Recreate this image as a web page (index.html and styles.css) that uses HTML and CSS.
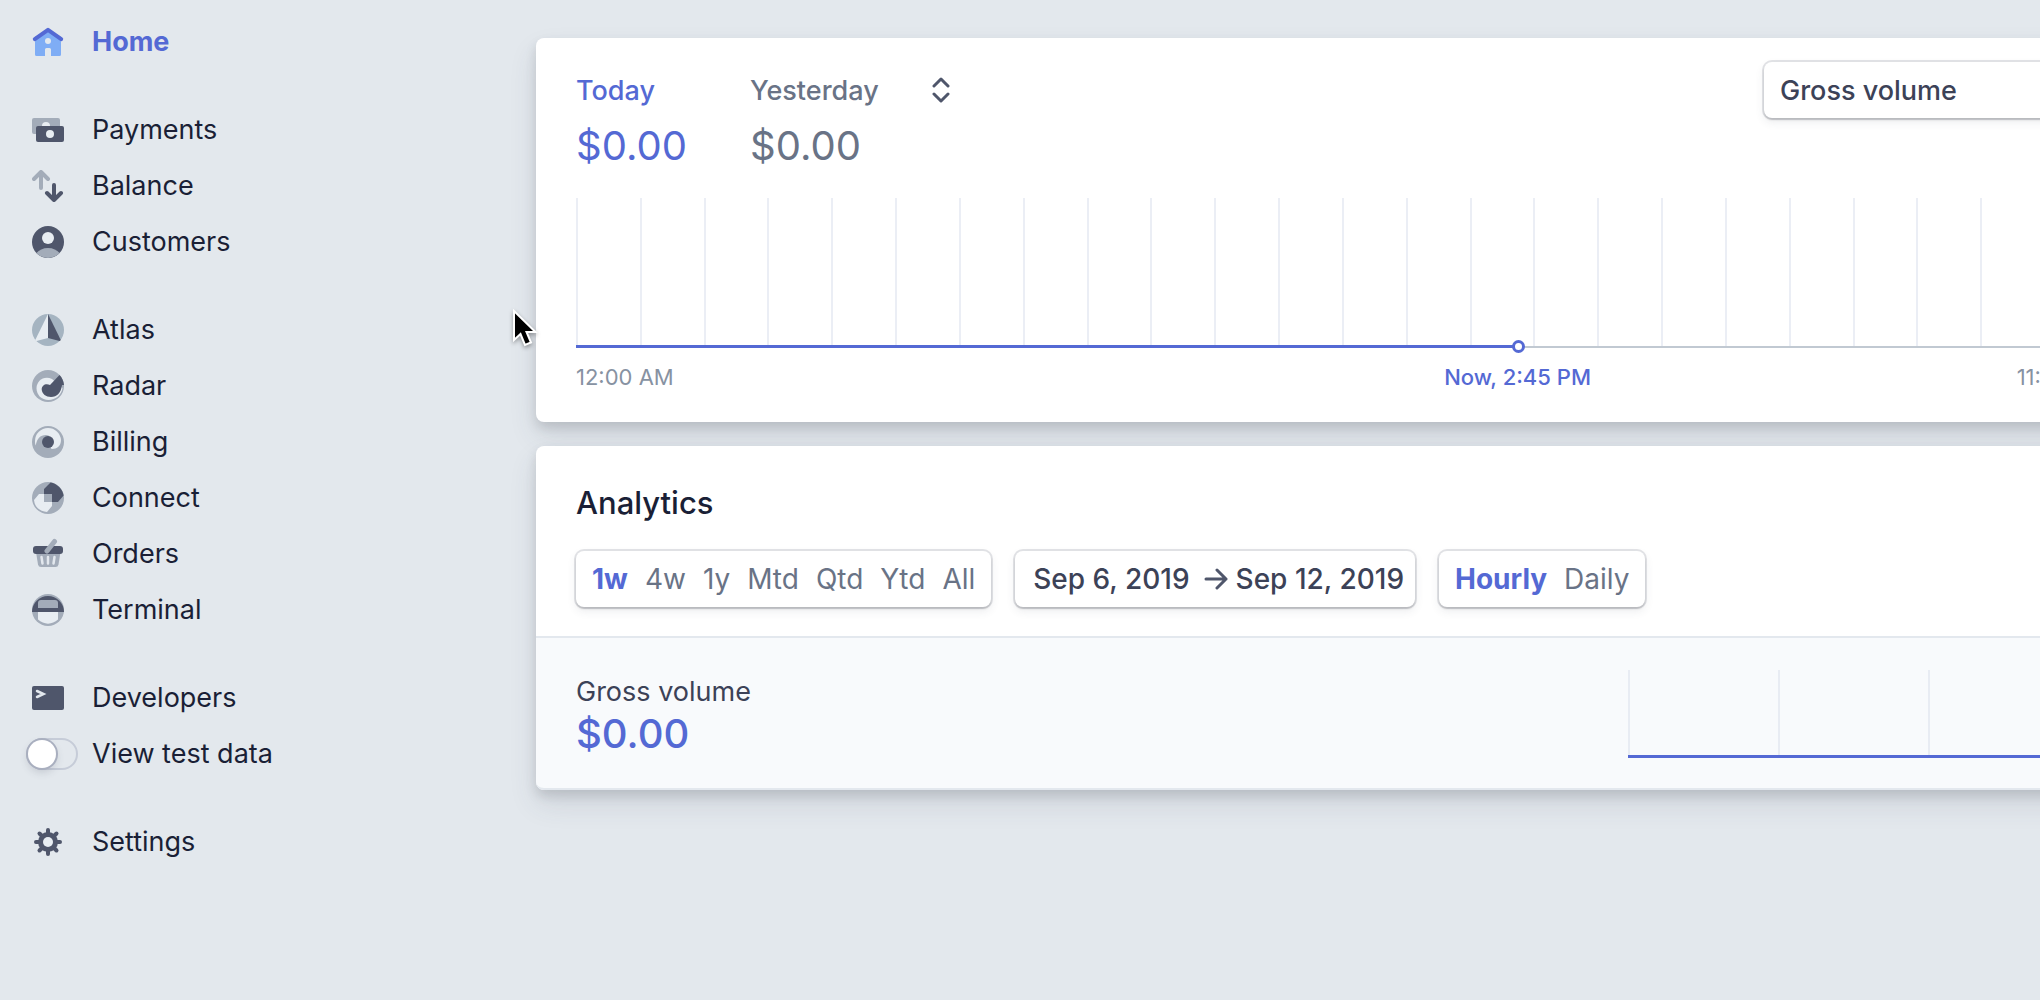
FILE: index.html
```html
<!DOCTYPE html>
<html lang="en">
<head>
<meta charset="utf-8">
<title>Home</title>
<link rel="stylesheet" href="styles.css">
</head>
<body>
<div class="app">
  <nav class="sidebar" aria-label="Main">
    <div class="nav-group">
      <a class="nav-item active" href="#"><svg class="icon" viewBox="0 0 32 32"><path d="M3 11 16 3 29 11V28.500a1.500 1.500 0 0 1-1.500 1.500H19V23.500a1.500 1.500 0 0 0-1.500-1.500h-3a1.500 1.500 0 0 0-1.500 1.500V30H4.500A1.500 1.500 0 0 1 3 28.500Z" fill="#7fadf5"/><path d="M2.800 13.200 16 3.800 29.200 13.200" fill="none" stroke="#5469d4" stroke-width="4" stroke-linecap="round" stroke-linejoin="round"/><circle cx="16" cy="15" r="3" fill="#e3e8ee"/></svg>Home</a>
    </div>
    <div class="nav-group">
      <a class="nav-item" href="#"><svg class="icon" viewBox="0 0 32 32"><rect y="4" width="28" height="16" rx="2" class="lt"/><circle cx="14" cy="12" r="4" class="bg"/><rect x="4" y="12" width="28" height="16" rx="2" class="dk"/><circle cx="18" cy="20" r="4" class="bg"/></svg>Payments</a>
      <a class="nav-item" href="#"><svg class="icon" viewBox="0 0 32 32"><g fill="none" stroke-width="4" stroke-linecap="round" stroke-linejoin="round"><path d="M2 9 9 2l7 7M9 3v15" stroke="#a3acb9"/><path d="m15 23 7 7 7-7M22 29V15" stroke="#4f566b"/></g></svg>Balance</a>
      <a class="nav-item" href="#"><svg class="icon" viewBox="0 0 32 32"><circle cx="16" cy="16" r="16" class="dk"/><circle cx="16" cy="12" r="6" class="bg"/><path d="M4.500 27C7 24 11 22 16 22s9 2 11.500 5A16 16 0 0 1 4.500 27Z" class="lt"/></svg>Customers</a>
    </div>
    <div class="nav-group">
      <a class="nav-item" href="#"><svg class="icon" viewBox="0 0 32 32"><circle cx="16" cy="16" r="16" fill="#a5b4c1"/><path d="M16 0 3.500 25.500Q3.500 27 4.500 27L16 24Z" class="bg"/><path d="M16 0 28.500 25.500Q28.800 27 27.500 27L16 24Z" class="dk"/></svg>Atlas</a>
      <a class="nav-item" href="#"><svg class="icon" viewBox="0 0 32 32"><circle cx="16" cy="16" r="16" class="lt"/><path d="M20 9C12 5 4.500 11 4.500 18c0 7 5 12 12 12 7 0 13-5 14-12Z" class="bg"/><path d="M27.500 5 18 15C14 13 9.700 15 9.700 19.500 10 24 14 27 19 27c6 0 10-4 11-12h2C31.500 11 30 7.500 27.500 5Z" class="dk"/></svg>Radar</a>
      <a class="nav-item" href="#"><svg class="icon" viewBox="0 0 32 32"><circle cx="16" cy="16" r="16" class="lt"/><path d="M16 2A13 13 0 0 1 29 14c0 6-4 9-9 9C17 23 22 9 14 9 8 9 5 13 3.700 19.500 3 18 3 16 3 15A13 13 0 0 1 16 2Z" class="bg"/><circle cx="16" cy="16" r="6" class="dk"/></svg>Billing</a>
      <a class="nav-item" href="#"><svg class="icon" viewBox="0 0 32 32"><circle cx="16" cy="16" r="16" class="lt"/><path d="M12 7 18.500.400C25 1.500 31 7 31.600 13.500L26 20H20V12H12Z" class="dk"/><path d="M2 18 7 12H12V20H20V24L15 30C8 29.500 2.500 25 2 18Z" class="bg"/></svg>Connect</a>
      <a class="nav-item" href="#"><svg class="icon" viewBox="0 0 32 32"><path d="M4 14H28.500L26.500 26.500Q26 29 23.500 29H9Q6.500 29 6 26.500Z" class="lt"/><path d="m9.500 19 1 6.500M16 19v6.500M22.500 19l-1 6.500" stroke="#e3e8ee" stroke-width="2.500" stroke-linecap="round"/><rect x="1" y="8" width="30" height="8" rx="3" class="dk"/><path d="M15 13 22.500 3.500" stroke="#a3acb9" stroke-width="5" stroke-linecap="round"/></svg>Orders</a>
      <a class="nav-item" href="#"><svg class="icon" viewBox="0 0 32 32"><circle cx="16" cy="16" r="16" class="lt"/><path d="M0 18a16 16 0 1 1 32 0Z" class="dk"/><path d="M6 14V9a3 3 0 0 1 3-3H23a3 3 0 0 1 3 3v5Z" class="lt"/><path d="M6 18H26v7.500C20 31 12 31 6 25.500Z" class="bg"/></svg>Terminal</a>
    </div>
    <div class="nav-group">
      <a class="nav-item" href="#"><svg class="icon" viewBox="0 0 32 32"><rect y="4" width="32" height="24" rx="2" class="dk"/><path d="m5 9 6.500 3L5 15" fill="none" stroke="#e3e8ee" stroke-width="2.500" stroke-linecap="round"/></svg>Developers</a>
      <label class="nav-item"><input class="toggle" type="checkbox">View test data</label>
    </div>
    <div class="nav-group">
      <a class="nav-item" href="#"><svg class="icon" viewBox="0 0 32 32"><g stroke="#4f566b" stroke-width="4" stroke-linecap="round"><path d="M16 4v24M4 16h24M7.500 7.500l17 17M24.500 7.500l-17 17"/></g><circle cx="16" cy="16" r="10" class="dk"/><circle cx="16" cy="16" r="5" class="bg"/></svg>Settings</a>
    </div>
  </nav>

  <main class="content">
    <section class="card today">
      <header class="today-head">
        <div class="figure current"><span class="figure-name">Today</span><span class="figure-value">$0.00</span></div>
        <div class="figure"><span class="figure-name">Yesterday</span><span class="figure-value">$0.00</span></div>
        <button class="sort" aria-label="Change comparison"><svg width="18" height="26" viewBox="0 0 18 26"><path d="m2 9 7-7 7 7M2 17l7 7 7-7" fill="none" stroke="#4f566b" stroke-width="3" stroke-linecap="round" stroke-linejoin="round"/></svg></button>
        <select class="box metric" aria-label="Metric"><option>Gross volume</option></select>
      </header>
      <div class="chart">
        <i></i><i></i><i></i><i></i><i></i><i></i><i></i><i></i><i></i><i></i><i></i><i></i><i></i><i></i><i></i><i></i><i></i><i></i><i></i><i></i><i></i><i></i><i></i><i></i>
        <div class="progress" style="width:61.46%"></div>
      </div>
      <div class="axis">
        <span>12:00 AM</span>
        <span class="now" style="left:61.46%">Now, 2:45 PM</span>
        <span>11:59 PM</span>
      </div>
    </section>

    <section class="card">
      <div class="analytics-head">
        <h2>Analytics</h2>
        <div class="filters">
          <div class="box segments">
            <button class="selected">1w</button><button>4w</button><button>1y</button><button>Mtd</button><button>Qtd</button><button>Ytd</button><button>All</button>
          </div>
          <button class="box dates">Sep 6, 2019<svg class="arrow" width="24" height="24" viewBox="0 0 24 24"><path d="M2 12h20M13 3l9 9-9 9" fill="none" stroke="#4f566b" stroke-width="3" stroke-linecap="round" stroke-linejoin="round"/></svg>Sep 12, 2019</button>
          <div class="box segments">
            <button class="selected">Hourly</button><button>Daily</button>
          </div>
        </div>
      </div>
      <div class="metric-row">
        <div class="metric-text">
          <div class="metric-name">Gross volume</div>
          <div class="metric-value">$0.00</div>
        </div>
        <div class="spark"><i></i><i></i><i></i><i></i></div>
      </div>
    </section>
  </main>
</div>
<svg class="cursor" width="28" height="40" viewBox="0 0 28 40"><path d="M2 2V31L8.500 25 13 36 19 33.500 14.500 23H23.500Z" fill="#000" stroke="#fff" stroke-width="2"/></svg>
</body>
</html>
```
FILE: styles.css
```css
*, *::before, *::after { box-sizing: border-box; }

body {
  margin: 0;
  min-height: 100vh;
  overflow-x: hidden;
  background: #e3e8ed;
  color: #1a1f36;
  font: 27px/32px Inter, "Liberation Sans", sans-serif;
}

button, select {
  margin: 0;
  padding: 0;
  border: 0;
  background: none;
  color: inherit;
  font: inherit;
}

.app {
  display: flex;
  min-height: 100vh;
  overflow: hidden;
}

.sidebar {
  display: flex;
  flex: 0 0 536px;
  flex-direction: column;
  gap: 32px;
  padding: 14px 0 14px 26px;
}

.nav-item {
  display: flex;
  align-items: center;
  height: 56px;
  color: #1a1f36;
  text-decoration: none;
}

.nav-item.active { color: #5469d4; font-weight: 700; }

.icon {
  width: 32px;
  height: 32px;
  margin: 0 28px 0 6px;
}

.dk { fill: #4f566b; }
.lt { fill: #a3acb9; }
.bg { fill: #e8edf2; }

.toggle {
  appearance: none;
  width: 52px;
  height: 32px;
  margin: 0 14px 0 0;
  border: 2px solid #c6ccd8;
  border-radius: 16px;
}

.toggle::before {
  content: "";
  display: block;
  width: 28px;
  height: 28px;
  border-radius: 50%;
  background: #fff;
  box-shadow: 0 0 0 2px #a9afbf, 0 4px 8px rgba(60, 66, 87, .2);
}

/* The content pane runs past the right edge of the window. */
.content {
  flex: 1;
  display: flex;
  flex-direction: column;
  gap: 24px;
  margin-right: -108px;
  padding-top: 38px;
}

.card {
  border-radius: 8px;
  background: #fff;
  box-shadow: 0 14px 28px rgba(60, 66, 87, .12), 0 6px 12px rgba(0, 0, 0, .12);
}

.today { padding: 24px 40px 29px; }

.today-head {
  display: flex;
  align-items: flex-start;
  height: 136px;
}

.figure {
  display: flex;
  flex-direction: column;
  gap: 15px;
  width: 174px;
  padding-top: 13px;
  color: #697386;
}

.current { color: #5469d4; }
.figure-name { font-weight: 500; }
.figure-value { font-size: 40px; line-height: 48px; }

.sort { height: 56px; padding: 0 8px; }
.sort svg { display: block; }

.box {
  height: 56px;
  border-radius: 8px;
  background: #fff;
  box-shadow: 0 0 0 2px rgba(60, 66, 87, .14), 0 2px 2px rgba(0, 0, 0, .14), 0 4px 10px rgba(60, 66, 87, .1);
}

.metric {
  appearance: none;
  width: 344px;
  margin-left: auto;
  padding: 2px 16px 0;
  color: #3c4257;
  font-weight: 500;
}

.chart {
  position: relative;
  display: grid;
  grid-template-columns: repeat(24, 1fr);
  height: 150px;
  border-bottom: 2px solid #c1c9d2;
}

.chart i { border-left: 2px solid #ebeef5; }

.progress {
  position: absolute;
  bottom: -2px;
  left: 0;
  height: 3px;
  background: #5469d4;
}

.progress::after {
  content: "";
  position: absolute;
  top: -5px;
  right: -7px;
  width: 13px;
  height: 13px;
  border: 3px solid #5469d4;
  border-radius: 50%;
  background: #fff;
}

.axis {
  position: relative;
  display: flex;
  justify-content: space-between;
  padding-top: 13px;
  color: #8792a2;
  font-size: 22px;
}

.now {
  position: absolute;
  transform: translateX(-50%);
  color: #5469d4;
  font-weight: 500;
}

.analytics-head { padding: 41px 40px 29px; }

h2 {
  margin: 0 0 32px;
  font-size: 31px;
  font-weight: 500;
  line-height: 32px;
}

.filters {
  display: flex;
  gap: 24px;
  font-size: 28px;
}

.segments {
  display: flex;
  align-items: center;
  gap: 17px;
  padding: 0 16px;
  color: #697386;
}

.selected { color: #5469d4; font-weight: 700; }

.dates {
  display: flex;
  align-items: center;
  padding: 0 11px 0 18px;
  color: #3c4257;
  font-weight: 500;
}

.arrow { margin: 0 8px 0 14px; }

.metric-row {
  display: flex;
  align-items: flex-start;
  justify-content: space-between;
  padding: 32px 40px 28px;
  border: solid #e3e8ee;
  border-width: 2px 0;
  border-radius: 0 0 8px 8px;
  background: #f8fafc;
}

.metric-text { padding-top: 6px; }
.metric-name { color: #3c4257; }
.metric-value { color: #5469d4; font-size: 40px; font-weight: 500; line-height: 52px; }

.spark {
  display: grid;
  grid-template-columns: repeat(3, 150px) 1fr;
  width: 480px;
  height: 88px;
  border-bottom: 3px solid #5469d4;
}

.spark i { border-left: 2px solid #e8ecf3; }

.cursor {
  position: absolute;
  top: 309px;
  left: 512px;
  filter: drop-shadow(0 2px 2px rgba(0, 0, 0, .35));
}
```
